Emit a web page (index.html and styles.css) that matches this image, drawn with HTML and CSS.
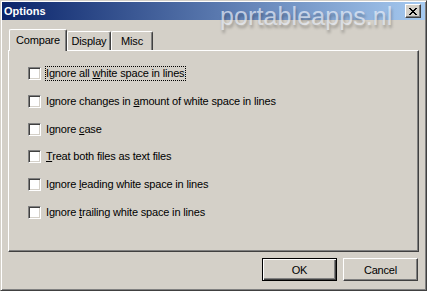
FILE: index.html
```html
<!DOCTYPE html>
<html>
<head>
<meta charset="utf-8">
<link rel="stylesheet" href="styles.css">
</head>
<body>
<div class="window">
  <div class="titlebar">
    <span class="title">Options</span>
    <button class="close" aria-label="Close">
      <svg width="8" height="7" viewBox="0 0 8 7" shape-rendering="crispEdges">
        <g fill="#000">
          <rect x="0" y="0" width="2" height="1"/><rect x="6" y="0" width="2" height="1"/>
          <rect x="1" y="1" width="2" height="1"/><rect x="5" y="1" width="2" height="1"/>
          <rect x="2" y="2" width="4" height="1"/>
          <rect x="3" y="3" width="2" height="1"/>
          <rect x="2" y="4" width="4" height="1"/>
          <rect x="1" y="5" width="2" height="1"/><rect x="5" y="5" width="2" height="1"/>
          <rect x="0" y="6" width="2" height="1"/><rect x="6" y="6" width="2" height="1"/>
        </g>
      </svg>
    </button>
  </div>
  <div class="body">
    <div class="tabs">
      <div class="tab active tab-compare">Compare</div>
      <div class="tab tab-display">Display</div>
      <div class="tab tab-misc">Misc</div>
    </div>
    <div class="panel">
      <div class="row"><span class="box"></span><span class="label focus">Ignore all <u>w</u>hite space in lines</span></div>
      <div class="row"><span class="box"></span><span class="label">Ignore changes in <u>a</u>mount of white space in lines</span></div>
      <div class="row"><span class="box"></span><span class="label">Ignore <u>c</u>ase</span></div>
      <div class="row"><span class="box"></span><span class="label"><u>T</u>reat both files as text files</span></div>
      <div class="row"><span class="box"></span><span class="label">Ignore <u>l</u>eading white space in lines</span></div>
      <div class="row"><span class="box"></span><span class="label">Ignore <u>t</u>railing white space in lines</span></div>
    </div>
    <div class="buttons">
      <button class="btn default">OK</button>
      <button class="btn">Cancel</button>
    </div>
  </div>
  <div class="watermark">portableapps.nl</div>
</div>
</body>
</html>
```
FILE: styles.css
```css
html, body {
  margin: 0;
  padding: 0;
}
body {
  width: 427px;
  height: 291px;
  background: #d4d0c8;
  font-family: "Liberation Sans", Arial, sans-serif;
  font-size: 11px;
  letter-spacing: -0.17px;
  color: #000;
  overflow: hidden;
}
.window {
  position: relative;
  width: 427px;
  height: 291px;
  box-sizing: border-box;
  border: 1px solid;
  border-color: #d4d0c8 #404040 #404040 #d4d0c8;
  padding: 1px;
  box-shadow: inset 1px 1px #fff, inset -1px -1px #808080;
  display: flex;
  flex-direction: column;
  background: #d4d0c8;
}
.titlebar {
  height: 18px;
  flex: none;
  display: flex;
  align-items: center;
  padding: 0 4px 0 2px;
  background: linear-gradient(to right, #0a246a, #a6caf0);
}
.title {
  color: #fff;
  font-weight: bold;
  font-size: 11px;
  line-height: 13px;
  letter-spacing: 0;
}
.close {
  margin-left: auto;
  width: 16px;
  height: 14px;
  box-sizing: border-box;
  padding: 0;
  border: 1px solid;
  border-color: #fff #404040 #404040 #fff;
  box-shadow: inset -1px -1px #808080;
  background: #d4d0c8;
  display: flex;
  align-items: center;
  justify-content: center;
}
.close svg {
  display: block;
  margin-left: -1px;
}
.body {
  flex: 1;
  display: flex;
  flex-direction: column;
  padding: 9px 6px 0 6px;
}
.tabs {
  height: 21px;
  display: flex;
  align-items: flex-end;
  padding-left: 1px;
}
.tab {
  box-sizing: border-box;
  height: 19px;
  border-top: 1px solid #fff;
  border-left: 1px solid #fff;
  border-right: 1px solid #404040;
  box-shadow: inset -1px 0 #808080;
  border-radius: 2px 2px 0 0;
  background: #d4d0c8;
  display: flex;
  align-items: center;
  justify-content: center;
  line-height: 13px;
}
.tab-compare { width: 58px; }
.tab-display { width: 44px; }
.tab-misc { width: 42px; }
.tab.active {
  height: 22px;
  margin-bottom: -1px;
  position: relative;
  z-index: 2;
  padding-bottom: 1px;
}
.panel {
  box-sizing: border-box;
  width: 411px;
  height: 202px;
  border: 1px solid;
  border-color: #fff #404040 #404040 #fff;
  box-shadow: inset -1px -1px #808080;
  padding: 16px 0 0 19px;
  display: flex;
  flex-direction: column;
  gap: 14.8px;
}
.row {
  height: 13px;
  display: flex;
  align-items: center;
}
.box {
  box-sizing: border-box;
  width: 13px;
  height: 13px;
  flex: none;
  background: #fff;
  border: 1px solid;
  border-color: #808080 #fff #fff #808080;
  box-shadow: inset 1px 1px #404040, inset -1px -1px #d4d0c8;
}
.label {
  margin-left: 4px;
  padding: 0 1px 0 0;
  border: 1px dotted transparent;
  line-height: 13px;
  white-space: nowrap;
}
.label.focus {
  border-color: #000;
}
.label u {
  text-decoration: underline;
  text-underline-offset: 1px;
}
.buttons {
  margin-top: 6px;
  display: flex;
  justify-content: flex-end;
  gap: 6px;
  padding-right: 1px;
}
.btn {
  box-sizing: border-box;
  width: 75px;
  height: 23px;
  padding: 0;
  background: #d4d0c8;
  border: 1px solid;
  border-color: #fff #404040 #404040 #fff;
  box-shadow: inset -1px -1px #808080;
  font-family: "Liberation Sans", Arial, sans-serif;
  font-size: 11px;
  letter-spacing: -0.17px;
  color: #000;
}
.btn.default {
  border: 1px solid #000;
  box-shadow: inset 1px 1px #fff, inset -1px -1px #404040, inset -2px -2px #808080;
}
.watermark {
  position: absolute;
  left: 219px;
  top: 3px;
  font-family: "Liberation Sans", Arial, sans-serif;
  font-size: 25px;
  line-height: 25px;
  letter-spacing: 0.1px;
  color: rgba(235, 240, 250, 0.7);
  text-shadow: 1px 3px 3px rgba(0, 0, 0, 0.28);
  pointer-events: none;
  white-space: nowrap;
}
```
